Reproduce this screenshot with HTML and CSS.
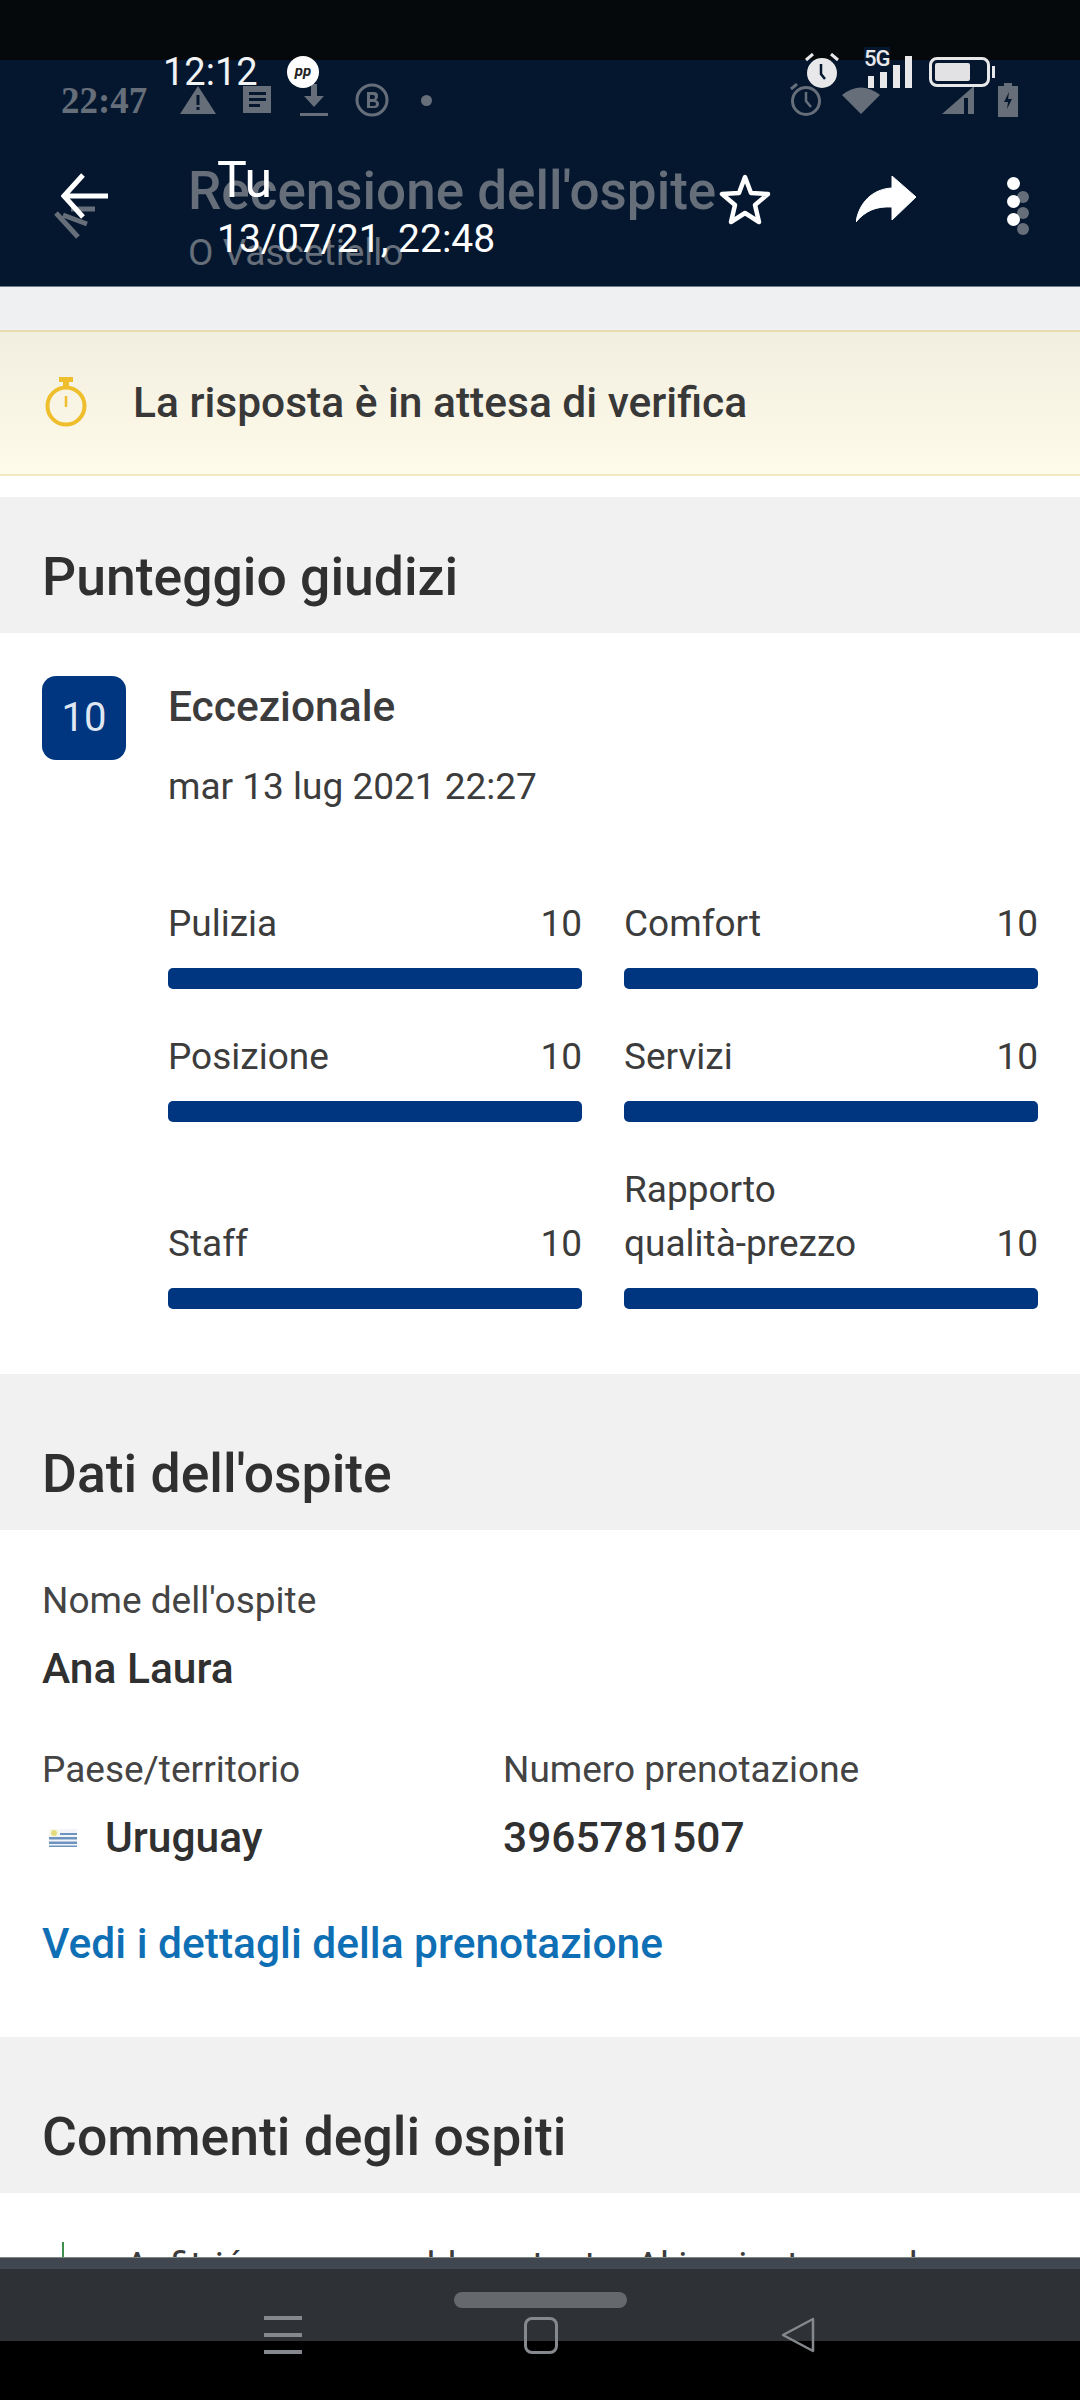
FILE: index.html

```html
<!DOCTYPE html>
<html lang="it">
<head>
  <meta charset="UTF-8">
  <title>Recensione dell'ospite</title>
  <link rel="stylesheet" href="styles.css">
</head>
<body>

<header class="top">
  <!-- the screenshot underneath, showing through -->
  <div class="ghost">
    <div class="ghost-status">
      <span class="ghost-time">22:47</span>
      <svg class="g-warn" viewBox="0 0 36 28"><path d="M18 0 36 28H0Z" fill="#666e79"/><path d="M16.500 9h3v10h-3zM16.500 21h3v3h-3z" fill="#04172f"/></svg>
      <svg class="g-msg" viewBox="0 0 30 28"><path d="M1 0h28v27H1Z" fill="#666e79"/><path d="M7 6h17v3H7zM7 12h17v3H7zM7 18h11v3H7z" fill="#04172f"/></svg>
      <svg class="g-down" viewBox="0 0 28 32"><path d="M11 0h6v12h7L14 23 4 12h7ZM0 29h28v3H0z" fill="#666e79"/></svg>
      <svg class="g-b" viewBox="0 0 34 34"><circle cx="17" cy="17" r="15" fill="none" stroke="#666e79" stroke-width="3"/><path d="M12 9h7q4 0 4 4 0 3-2 4 3 1 3 4 0 4-5 4h-7Zm3 3v4h3q2 0 2-2t-2-2Zm0 7v4h4q2 0 2-2t-2-2Z" fill="#666e79"/></svg>
      <span class="g-dot"></span>
      <span class="ghost-spacer"></span>
      <svg class="g-clock" viewBox="0 0 32 34"><circle cx="16" cy="18" r="13.500" fill="none" stroke="#666e79" stroke-width="3"/><path d="M16 9v9l5 6" fill="none" stroke="#666e79" stroke-width="2.500"/><path d="M1 6 7 1" stroke="#666e79" stroke-width="3"/></svg>
      <svg class="g-wifi" viewBox="0 0 38 28"><path d="M0 9Q19-6 38 9L19 28Z" fill="#666e79"/></svg>
      <svg class="g-signal" viewBox="0 0 32 28"><path d="M32 0V28H0Z" fill="#666e79"/><path d="M22 12h4v16h-4z" fill="#04172f"/></svg>
      <svg class="g-batt" viewBox="0 0 20 34"><path d="M6 0h8v3h6v31H0V3h6Z" fill="#666e79"/><path d="M11 9 6 19h4l-1 7 5-10h-4Z" fill="#04172f"/></svg>
    </div>
    <div class="ghost-bar">
      <svg class="g-menu" viewBox="0 0 44 34"><path d="M18 4h24M10 10l24 9M3 8l22 24" fill="none" stroke="#666e79" stroke-width="5"/></svg>
      <div>
        <div class="ghost-title">Recensione dell'ospite</div>
        <div class="ghost-sub">O Vascetiello</div>
      </div>
    </div>
    <div class="ghost-dots"><i></i><i></i><i></i></div>
  </div>

  <div class="status">
    <span class="clock">12:12</span>
    <span class="pp">pp</span>
    <span class="status-spacer"></span>
    <svg class="alarm" viewBox="0 0 34 36"><path d="M1 7 8 1M33 7 26 1" stroke="#e8e8ea" stroke-width="3"/><circle cx="17" cy="20" r="15" fill="#e8e8ea"/><path d="M16 11v10l4 5" fill="none" stroke="#04172f" stroke-width="2.500"/></svg>
    <div class="net">
      <span class="net-label">5G</span>
      <svg class="net-bars" viewBox="0 0 44 32"><path d="M0 20h6v12H0zM12 16h7v16h-7zM25 9h7v23h-7zM37 0h7v32h-7z" fill="#e8e8ea"/></svg>
    </div>
    <div class="battery"><span class="battery-fill"></span></div>
    <span class="battery-nub"></span>
  </div>

  <div class="toolbar">
    <svg class="back" viewBox="0 0 48 46"><path d="M47 23H4M22 2 3 23l19 21" fill="none" stroke="#fff" stroke-width="5"/></svg>
    <div class="who">
      <div class="who-name">Tu</div>
      <div class="who-date">13/07/21, 22:48</div>
    </div>
    <svg class="star" viewBox="0 0 54 52"><path d="M27 4 33 20 50 21 37 32 41 49 27 40 13 49 17 32 4 21 21 20Z" fill="none" stroke="#fff" stroke-width="4.500" stroke-linejoin="round"/></svg>
    <svg class="share" viewBox="0 0 60 46"><path d="M36 0 60 21 36 44V31C20 30 9 35 0 46 3 27 16 13 36 12Z" fill="#fff" stroke="#fff" stroke-linejoin="round"/></svg>
    <div class="dots"><i></i><i></i><i></i></div>
  </div>
</header>

<main class="page">
  <div class="strip"></div>
  <div class="notice">
    <svg class="timer" viewBox="0 0 42 50"><path d="M14 0h14v5h-4v4h-6V5h-4z" fill="#efbe2c"/><circle cx="21" cy="29" r="18.500" fill="none" stroke="#efbe2c" stroke-width="4"/><path d="M21 19v11" stroke="#efbe2c" stroke-width="2.500"/></svg>
    <span>La risposta è in attesa di verifica</span>
  </div>

  <h2 class="section-head first">Punteggio giudizi</h2>
  <section class="scores">
    <div class="rating">
      <div class="badge">10</div>
      <div class="rating-text">
        <div class="rating-name">Eccezionale</div>
        <div class="rating-date">mar 13 lug 2021 22:27</div>
      </div>
    </div>
    <div class="score-grid">
      <div class="score"><div class="score-row"><span>Pulizia</span><span>10</span></div><div class="bar"></div></div>
      <div class="score"><div class="score-row"><span>Comfort</span><span>10</span></div><div class="bar"></div></div>
      <div class="score"><div class="score-row"><span>Posizione</span><span>10</span></div><div class="bar"></div></div>
      <div class="score"><div class="score-row"><span>Servizi</span><span>10</span></div><div class="bar"></div></div>
      <div class="score"><div class="score-row"><span>Staff</span><span>10</span></div><div class="bar"></div></div>
      <div class="score"><div class="score-row"><span class="score-long">Rapporto qualità-prezzo</span><span>10</span></div><div class="bar"></div></div>
    </div>
  </section>

  <h2 class="section-head">Dati dell'ospite</h2>
  <section class="guest">
    <div class="field-label">Nome dell'ospite</div>
    <div class="field-value">Ana Laura</div>
    <div class="guest-grid">
      <div>
        <div class="field-label">Paese/territorio</div>
        <div class="field-value country">
          <svg class="flag" viewBox="0 0 28 18"><path d="M0 0h28v18H0z" fill="#f3f5f8"/><path d="M0 4h28v2H0zM0 8h28v2.500H0zM0 12.500h28V15H0zM0 16.500h28V18H0z" fill="#6f93bf"/><path d="M0 0h11v8H0z" fill="#f6f7ef"/><circle cx="5" cy="4" r="3" fill="#e6dc7c"/></svg>
          <span>Uruguay</span>
        </div>
      </div>
      <div>
        <div class="field-label">Numero prenotazione</div>
        <div class="field-value">3965781507</div>
      </div>
    </div>
    <a class="details" href="#">Vedi i dettagli della prenotazione</a>
  </section>

  <h2 class="section-head">Commenti degli ospiti</h2>
  <section class="comment">
    <svg class="comment-icon" viewBox="0 0 42 42"><path d="M20 0h2v42h-2z" fill="#3f8f4f"/><path d="M0 20h42v2H0z" fill="#3f8f4f"/></svg>
    <p>Anfitrión muy amable y atento. Al ir a instarnos, la</p>
  </section>
</main>

<nav class="navbar">
  <span class="pill"></span>
  <div class="nav-icons">
    <div class="nav-menu"><i></i><i></i><i></i></div>
    <span class="nav-home"></span>
    <svg class="nav-back" viewBox="0 0 36 36"><path d="M33 2 3 18l30 16Z" fill="none" stroke="#85888c" stroke-width="2.500" stroke-linejoin="round"/></svg>
  </div>
</nav>

</body>
</html>
```

FILE: styles.css

```css
* {
  box-sizing: border-box;
}

html, body {
  margin: 0;
  height: 2400px;
  overflow: hidden;
}

body {
  display: flex;
  flex-direction: column;
  width: 1080px;
  background: #000;
  font-family: Roboto, "Liberation Sans", sans-serif;
  color: #3c3c3c;
}

/* top of the phone */
.top {
  position: relative;
  height: 287px;
  flex: none;
  background: linear-gradient(#06090c 60px, #04172f 60px);
  border-bottom: 1px solid #6f7a88;
}

.ghost {
  position: absolute;
  left: 0;
  right: 0;
  top: 0;
  bottom: 0;
  padding: 84px 0 0 61px;
  color: #666e79;
}

.ghost-status {
  display: flex;
  align-items: center;
  height: 32px;
  padding-right: 62px;
}

.ghost-time {
  width: 119px;
  font-family: "Liberation Serif", serif;
  font-weight: bold;
  font-size: 37px;
}

.g-warn { width: 36px; height: 28px; }
.g-msg { width: 30px; height: 28px; margin-left: 26px; }
.g-down { width: 28px; height: 32px; margin-left: 28px; }
.g-b { width: 34px; height: 34px; margin-left: 27px; }

.g-dot {
  width: 11px;
  height: 11px;
  margin-left: 32px;
  border-radius: 50%;
  background: #666e79;
}

.ghost-spacer { flex: 1; }
.g-clock { width: 32px; height: 34px; }
.g-wifi { width: 38px; height: 28px; margin-left: 20px; }
.g-signal { width: 32px; height: 28px; margin-left: 62px; }
.g-batt { width: 20px; height: 34px; margin-left: 24px; }

.ghost-bar {
  display: flex;
  margin-top: 46px;
}

.g-menu {
  width: 44px;
  height: 34px;
  margin: 43px 91px 0 -8px;
}

.ghost-title {
  font-weight: 500;
  font-size: 53px;
  line-height: 58px;
  white-space: nowrap;
}

.ghost-sub {
  margin-top: 12px;
  font-size: 37px;
  line-height: 42px;
}

.ghost-dots {
  position: absolute;
  left: 1017px;
  top: 191px;
}

.ghost-dots i {
  display: block;
  width: 12px;
  height: 12px;
  margin-bottom: 4px;
  border-radius: 50%;
  background: #666e79;
}

.status {
  position: relative;
  display: flex;
  align-items: center;
  height: 32px;
  padding: 56px 0 0 163px;
  box-sizing: content-box;
  color: #f2f3f5;
}

.clock {
  font-size: 38px;
  line-height: 32px;
  width: 124px;
}

.pp {
  width: 32px;
  height: 32px;
  border-radius: 50%;
  background: #fff;
  color: #222;
  font-size: 15px;
  font-weight: bold;
  font-style: italic;
  line-height: 30px;
  text-align: center;
}

.status-spacer { flex: 1; }

.alarm {
  width: 34px;
  height: 36px;
  margin-top: -2px;
}

.net {
  position: relative;
  width: 44px;
  height: 32px;
  margin-left: 29px;
}

.net-label {
  position: absolute;
  left: -4px;
  top: -9px;
  font-size: 22px;
  font-weight: 500;
  letter-spacing: -1px;
  line-height: 24px;
  color: #e8e8ea;
  background: #04172f;
}

.net-bars {
  display: block;
  width: 44px;
  height: 32px;
}

.battery {
  width: 61px;
  height: 30px;
  margin-left: 17px;
  padding: 3px;
  border: 3px solid #e8e8ea;
  border-radius: 8px;
}

.battery-fill {
  display: block;
  width: 35px;
  height: 100%;
  border-radius: 2px;
  background: #e2e2e4;
}

.battery-nub {
  width: 3px;
  height: 12px;
  margin: 0 85px 0 2px;
  background: #e8e8ea;
}

.toolbar {
  position: relative;
  display: flex;
  align-items: center;
  height: 106px;
  margin-top: 49px;
  padding-left: 61px;
}

.back {
  width: 48px;
  height: 46px;
  margin-top: 12px;
}

.who {
  width: 495px;
  margin-left: 108px;
  margin-top: 36px;
  color: #fff;
}

.who-name {
  font-size: 50px;
  line-height: 50px;
}

.who-date {
  margin-top: 12px;
  font-size: 39px;
  line-height: 44px;
  white-space: nowrap;
}

.star {
  width: 54px;
  height: 52px;
  margin-top: 18px;
  margin-left: 6px;
}

.share {
  width: 60px;
  height: 46px;
  margin-top: 18px;
  margin-left: 84px;
}

.dots {
  margin-left: 91px;
  padding-top: 27px;
}

.dots i {
  display: block;
  width: 13px;
  height: 13px;
  margin-bottom: 5px;
  border-radius: 50%;
  background: #fff;
}

/* page content */
.page {
  flex: 1;
  overflow: hidden;
  background: #fff;
}

.strip {
  height: 43px;
  background: #eff0f2;
}

.notice {
  display: flex;
  align-items: center;
  height: 146px;
  padding: 0 0 2px 45px;
  border-top: 2px solid #e6dcae;
  border-bottom: 2px solid #f0e9c2;
  background: linear-gradient(#f2eee0, #fffbea);
  margin-bottom: 21px;
  font-size: 42.500px;
  font-weight: 500;
  color: #383838;
}

.timer {
  width: 42px;
  height: 50px;
  margin-right: 46px;
}

.section-head {
  margin: 0;
  padding: 70px 42px 26px;
  background: #f1f1f2;
  font-size: 53.500px;
  font-weight: 500;
  line-height: 60px;
  color: #303030;
}

.section-head.first {
  padding-top: 50px;
}

.scores {
  padding: 43px 42px 65px;
}

.rating {
  display: flex;
  gap: 42px;
}

.badge {
  width: 84px;
  height: 84px;
  border-radius: 14px;
  background: #003580;
  color: #dfe7f2;
  font-size: 40px;
  line-height: 84px;
  text-align: center;
}

.rating-text {
  margin-top: 4px;
}

.rating-name {
  font-size: 42.500px;
  font-weight: 500;
  line-height: 54px;
}

.rating-date {
  margin-top: 26px;
  font-size: 37px;
  line-height: 54px;
}

.score-grid {
  display: grid;
  grid-template-columns: 414px 414px;
  column-gap: 42px;
  row-gap: 41px;
  align-items: end;
  margin: 83px 0 0 126px;
}

.score-row {
  display: flex;
  justify-content: space-between;
  align-items: flex-end;
  font-size: 37px;
  line-height: 54px;
}

.score-long {
  width: 240px;
}

.bar {
  height: 21px;
  margin-top: 17px;
  border-radius: 5px;
  background: #003580;
}

.guest {
  padding: 44px 42px 66px;
}

.field-label {
  font-size: 37px;
  line-height: 54px;
  color: #444;
}

.field-value {
  margin-top: 14px;
  font-size: 42.500px;
  font-weight: 500;
  line-height: 54px;
  color: #303030;
}

.guest-grid {
  display: grid;
  grid-template-columns: 461px 1fr;
  margin-top: 47px;
}

.country {
  display: flex;
  align-items: center;
}

.flag {
  width: 28px;
  height: 18px;
  margin: 0 28px 0 7px;
}

.details {
  display: block;
  margin-top: 52px;
  font-size: 42.500px;
  font-weight: 500;
  line-height: 54px;
  color: #0f6fb5;
  text-decoration: none;
}

.comment {
  display: flex;
  padding: 46px 42px 0;
}

.comment-icon {
  width: 42px;
  height: 42px;
  margin: 3px 41px 0 0;
  flex: none;
}

.comment p {
  margin: 0;
  font-size: 37px;
  line-height: 54px;
  white-space: nowrap;
}

/* phone buttons */
.navbar {
  display: flex;
  flex-direction: column;
  align-items: center;
  height: 143px;
  flex: none;
  padding-top: 34px;
  background: linear-gradient(#404751 11px, #2e3236 11px, #2e3236 83px, #000 83px);
  border-top: 1px solid #7c8880;
}

.pill {
  width: 173px;
  height: 16px;
  border-radius: 8px;
  background: #65686c;
}

.nav-icons {
  display: flex;
  align-items: center;
  gap: 222px;
  margin-top: 8px;
}

.nav-menu {
  display: flex;
  flex-direction: column;
  gap: 13px;
  width: 38px;
}

.nav-menu i {
  display: block;
  height: 4px;
  background: #85888c;
}

.nav-home {
  width: 34px;
  height: 37px;
  border: 3px solid #85888c;
  border-radius: 8px;
}

.nav-back {
  width: 36px;
  height: 36px;
}
```
